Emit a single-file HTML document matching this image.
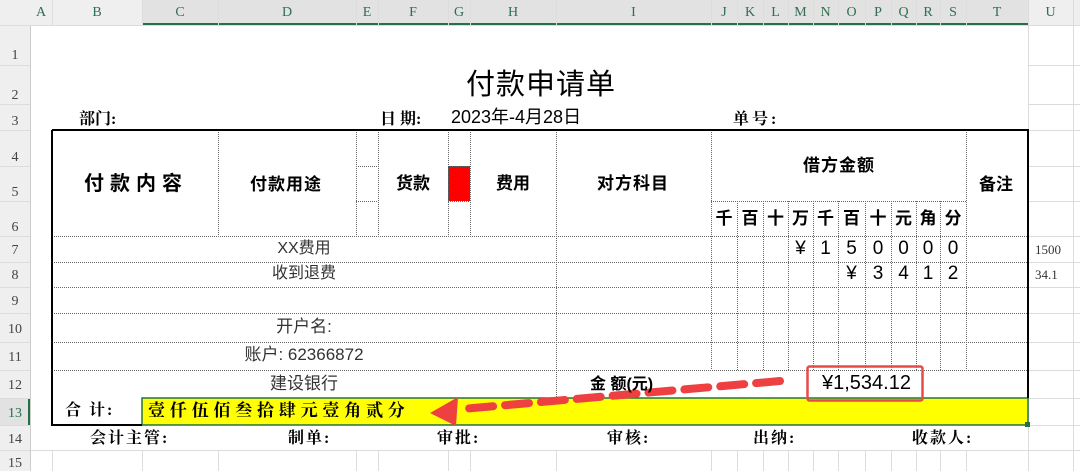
<!DOCTYPE html><html><head><meta charset="utf-8"><style>
body{margin:0;width:1080px;height:471px;overflow:hidden;background:#fff;position:relative;font-family:"Liberation Serif","Noto Serif CJK SC",serif}
.t{position:absolute;white-space:nowrap;line-height:1;color:#000}
.s{font-family:"Liberation Sans","Noto Sans CJK SC",sans-serif}
.b{font-weight:bold}
.ch{position:absolute;top:5px;font-size:14px;color:#2f6f4f;text-align:center}
.rh{position:absolute;left:0;width:30px;font-size:14px;color:#444;text-align:center}
</style></head><body>
<svg width="1080" height="471" style="position:absolute;left:0;top:0">
<rect x="0" y="0" width="1080" height="25" fill="#efefef"/>
<rect x="142" y="0" width="886" height="25" fill="#e2e2e2"/>
<rect x="0" y="0" width="30" height="471" fill="#efefef"/>
<rect x="0" y="398" width="30" height="27" fill="#e2e2e2"/>
<line x1="142" y1="24" x2="1028" y2="24" stroke="#217346" stroke-width="2"/>
<line x1="29" y1="398" x2="29" y2="425" stroke="#217346" stroke-width="2"/>
<g stroke="#dcdcdc" stroke-width="1">
<path d="M52.5 0V471M142.5 0V471M218.5 0V471M356.5 0V471M378.5 0V471M448.5 0V471M470.5 0V471M556.5 0V471M711.5 0V471M737.5 0V471M763.5 0V471M788.5 0V471M813.5 0V471M838.5 0V471M865.5 0V471M891.5 0V471M916.5 0V471M940.5 0V471M966.5 0V471M1028.5 0V471M1073.5 0V471"/>
<path d="M0 25.5H1080M0 65.5H1080M0 104.5H1080M0 130.5H1080M0 166.5H1080M0 201.5H1080M0 236.5H1080M0 262.5H1080M0 287.5H1080M0 313.5H1080M0 342.5H1080M0 370.5H1080M0 398.5H1080M0 425.5H1080M0 450.5H1080"/>
</g>
<rect x="30" y="26" width="1" height="445" fill="#ccc"/>
<rect x="31" y="26" width="997" height="424" fill="#fff"/>
<rect x="448" y="166" width="22" height="35" fill="#f00"/>
<g stroke="#666" stroke-width="1" stroke-dasharray="1 1" fill="none">
<path d="M218.5 130V236M356.5 130V236M378.5 130V236M448.5 130V236M470.5 130V236M556.5 130V398M711.5 130V370M966.5 130V370"/>
<path d="M356 166.5H378M356 201.5H378M448 166.5H470M448 201.5H470M711 201.5H966"/>
<path d="M737.5 201V370M763.5 201V370M788.5 201V370M813.5 201V370M838.5 201V370M865.5 201V370M891.5 201V370M916.5 201V370M940.5 201V370"/>
<path d="M52 236.5H1028M52 262.5H1028M52 287.5H1028M52 313.5H1028M52 342.5H1028M52 370.5H1028"/>
</g>
<rect x="142" y="398" width="886" height="27" fill="#ffff00" stroke="#217346" stroke-width="1.5"/>
<rect x="1025" y="422" width="5" height="5" fill="#217346"/>
<path d="M52 130H1028V398M52 130V425H142" stroke="#000" stroke-width="2" fill="none"/>
<rect x="807.5" y="366.5" width="115" height="34" rx="2" fill="none" stroke="#e84a4a" stroke-width="2.5"/>
<path d="M780 381L462 409" stroke="#ee4040" stroke-width="8" stroke-dasharray="24 12" stroke-linecap="round" fill="none"/>
<path d="M430 413L458 397L456 426Z" fill="#ee4040"/>
</svg>
<div class="ch" style="left:30px;width:22px">A</div><div class="ch" style="left:52px;width:90px">B</div><div class="ch" style="left:142px;width:76px">C</div><div class="ch" style="left:218px;width:138px">D</div><div class="ch" style="left:356px;width:22px">E</div><div class="ch" style="left:378px;width:70px">F</div><div class="ch" style="left:448px;width:22px">G</div><div class="ch" style="left:470px;width:86px">H</div><div class="ch" style="left:556px;width:155px">I</div><div class="ch" style="left:711px;width:26px">J</div><div class="ch" style="left:737px;width:26px">K</div><div class="ch" style="left:763px;width:25px">L</div><div class="ch" style="left:788px;width:25px">M</div><div class="ch" style="left:813px;width:25px">N</div><div class="ch" style="left:838px;width:27px">O</div><div class="ch" style="left:865px;width:26px">P</div><div class="ch" style="left:891px;width:25px">Q</div><div class="ch" style="left:916px;width:24px">R</div><div class="ch" style="left:940px;width:26px">S</div><div class="ch" style="left:966px;width:62px">T</div><div class="ch" style="left:1028px;width:45px">U</div>
<div class="rh" style="top:48px">1</div><div class="rh" style="top:88px">2</div><div class="rh" style="top:114px">3</div><div class="rh" style="top:150px">4</div><div class="rh" style="top:185px">5</div><div class="rh" style="top:220px">6</div><div class="rh" style="top:243px">7</div><div class="rh" style="top:268px">8</div><div class="rh" style="top:294px">9</div><div class="rh" style="top:322px">10</div><div class="rh" style="top:350px">11</div><div class="rh" style="top:378px">12</div><div class="rh" style="top:406px;color:#217346">13</div><div class="rh" style="top:432px">14</div><div class="rh" style="top:456px">15</div>
<div class="t s" style="left:466px;top:71px;font-size:29px;letter-spacing:1px">付款申请单</div>
<div class="t b" style="left:79px;top:112px;font-size:16px">部门:</div>
<div class="t b" style="left:380px;top:112px;font-size:16px">日 期:</div>
<div class="t s" style="left:451px;top:108px;font-size:18px">2023年-4月28日</div>
<div class="t b" style="left:733px;top:112px;font-size:16px;letter-spacing:3px">单号:</div>
<div class="t s b" style="left:84px;top:174px;font-size:20px;letter-spacing:6px">付款内容</div>
<div class="t s b" style="left:250px;top:176px;font-size:17px;letter-spacing:1px">付款用途</div>
<div class="t s b" style="left:396px;top:175px;font-size:17px">货款</div>
<div class="t s b" style="left:496px;top:175px;font-size:17px">费用</div>
<div class="t s b" style="left:597px;top:175px;font-size:17px;letter-spacing:1px">对方科目</div>
<div class="t s b" style="left:803px;top:157px;font-size:17px;letter-spacing:1px">借方金额</div>
<div class="t s b" style="left:979px;top:176px;font-size:17px">备注</div>
<div class="t s b" style="left:711px;top:210px;font-size:17px;display:flex"><span style="width:26px;text-align:center">千</span><span style="width:26px;text-align:center">百</span><span style="width:25px;text-align:center">十</span><span style="width:25px;text-align:center">万</span><span style="width:25px;text-align:center">千</span><span style="width:27px;text-align:center">百</span><span style="width:26px;text-align:center">十</span><span style="width:25px;text-align:center">元</span><span style="width:24px;text-align:center">角</span><span style="width:26px;text-align:center">分</span></div>
<div class="t s" style="left:52px;width:504px;text-align:center;top:241px;font-size:16px;color:#333">XX费用</div>
<div class="t s" style="left:52px;width:504px;text-align:center;top:266px;font-size:16px;color:#333">收到退费</div>
<div class="t s" style="left:52px;width:504px;text-align:center;top:318px;font-size:17px;color:#333">开户名:</div>
<div class="t s" style="left:52px;width:504px;text-align:center;top:346px;font-size:17px;color:#333">账户: 62366872</div>
<div class="t s" style="left:52px;width:504px;text-align:center;top:375px;font-size:17px;color:#333">建设银行</div>
<div class="t s" style="left:788px;top:239px;font-size:19px;display:flex"><span style="width:25px;text-align:center">¥</span><span style="width:25px;text-align:center">1</span><span style="width:27px;text-align:center">5</span><span style="width:26px;text-align:center">0</span><span style="width:25px;text-align:center">0</span><span style="width:24px;text-align:center">0</span><span style="width:26px;text-align:center">0</span></div>
<div class="t s" style="left:838px;top:264px;font-size:19px;display:flex"><span style="width:27px;text-align:center">¥</span><span style="width:26px;text-align:center">3</span><span style="width:25px;text-align:center">4</span><span style="width:24px;text-align:center">1</span><span style="width:26px;text-align:center">2</span></div>
<div class="t" style="left:1035px;top:243px;font-size:13px;color:#333">1500</div>
<div class="t" style="left:1035px;top:268px;font-size:13px;color:#333">34.1</div>
<div class="t s b" style="left:590px;top:377px;font-size:16px">金 额(元)</div>
<div class="t s" style="left:822px;top:373px;font-size:20px">¥1,534.12</div>
<div class="t b" style="left:65px;top:403px;font-size:16px;letter-spacing:2px">合 计:</div>
<div class="t b" style="left:148px;top:402px;font-size:17px;letter-spacing:4.8px">壹仟伍佰叁拾肆元壹角贰分</div>
<div class="t b" style="left:90px;top:431px;font-size:16px;letter-spacing:2px">会计主管:</div>
<div class="t b" style="left:288px;top:431px;font-size:16px;letter-spacing:2px">制单:</div>
<div class="t b" style="left:437px;top:431px;font-size:16px;letter-spacing:2px">审批:</div>
<div class="t b" style="left:607px;top:431px;font-size:16px;letter-spacing:2px">审核:</div>
<div class="t b" style="left:753px;top:431px;font-size:16px;letter-spacing:2px">出纳:</div>
<div class="t b" style="left:912px;top:431px;font-size:16px;letter-spacing:2px">收款人:</div>
</body></html>
